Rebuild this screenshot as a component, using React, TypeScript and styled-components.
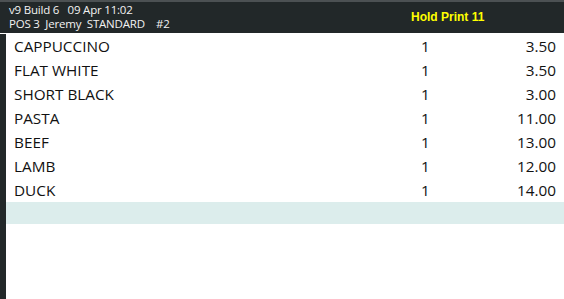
import styled, { createGlobalStyle } from "styled-components";

const GlobalStyle = createGlobalStyle`
  html, body {
    margin: 0;
    padding: 0;
    background: #ffffff;
  }
  body {
    font-family: "Open Sans", "Noto Sans", sans-serif;
  }
`;

interface Item {
  name: string;
  qty: number;
  price: string;
}

const items: Item[] = [
  { name: "CAPPUCCINO", qty: 1, price: "3.50" },
  { name: "FLAT WHITE", qty: 1, price: "3.50" },
  { name: "SHORT BLACK", qty: 1, price: "3.00" },
  { name: "PASTA", qty: 1, price: "11.00" },
  { name: "BEEF", qty: 1, price: "13.00" },
  { name: "LAMB", qty: 1, price: "12.00" },
  { name: "DUCK", qty: 1, price: "14.00" },
];

export default function App() {
  return (
    <>
      <GlobalStyle />
      <Screen>
        <Header>
          <Info>
            <span>v9 Build 6&nbsp;&nbsp; 09 Apr 11:02</span>
            <span>POS 3&nbsp; Jeremy&nbsp; STANDARD&nbsp;&nbsp;&nbsp; #2</span>
          </Info>
          <HoldLabel>Hold Print 11</HoldLabel>
        </Header>
        <Body>
          <Sidebar />
          <List>
            {items.map((item, index) => (
              <Row key={index}>
                <Name>{item.name}</Name>
                <Qty>{item.qty}</Qty>
                <Price>{item.price}</Price>
              </Row>
            ))}
            <Row selected />
          </List>
        </Body>
      </Screen>
    </>
  );
}

const Screen = styled.div`
  width: 564px;
  height: 299px;
  display: flex;
  flex-direction: column;
  overflow: hidden;
`;

const Header = styled.header`
  display: grid;
  grid-template-columns: 1fr 200px;
  align-items: center;
  height: 33px;
  box-sizing: border-box;
  padding: 0 0 0 9px;
  background: #222829;
  border-top: 2px solid #4c5153;
`;

const Info = styled.div`
  display: flex;
  flex-direction: column;
  color: #f2f2f2;
  font-size: 11.5px;
  line-height: 14px;
  margin-top: -2px;
  letter-spacing: -0.2px;
`;

const HoldLabel = styled.div`
  color: #ffff00;
  font-family: "Liberation Sans", Arial, sans-serif;
  font-weight: 700;
  font-size: 12px;
  justify-self: start;
  margin-left: 47px;
  margin-top: -1px;
`;

const Body = styled.div`
  flex: 1;
  display: flex;
  padding-top: 1px;
  background: #ffffff;
`;

const Sidebar = styled.div`
  width: 6px;
  background: #222829;
`;

const List = styled.div`
  flex: 1;
  display: flex;
  flex-direction: column;
`;

const Row = styled.div<{ selected?: boolean }>`
  display: grid;
  grid-template-columns: 1fr 60px 75px;
  align-items: center;
  height: ${(p) => (p.selected ? "22px" : "24px")};
  padding: 0 8px;
  background: ${(p) => (p.selected ? "#dcedec" : "transparent")};
  color: #111111;
  font-size: 15.3px;
`;

const Name = styled.span``;

const Qty = styled.span`
  text-align: left;
`;

const Price = styled.span`
  text-align: right;
`;
